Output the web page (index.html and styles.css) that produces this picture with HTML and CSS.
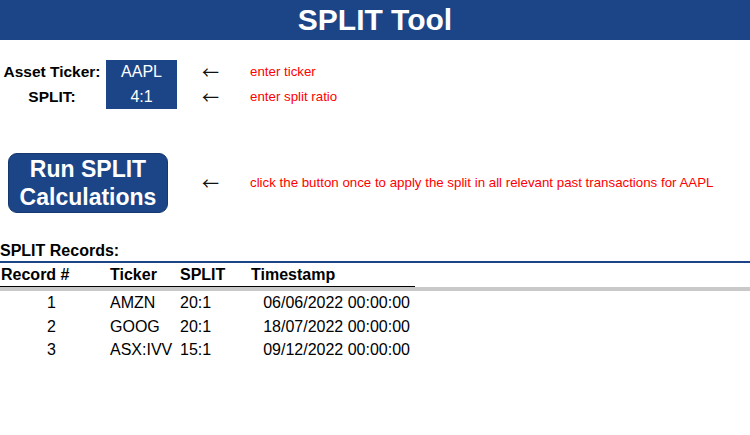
FILE: index.html
```html
<!DOCTYPE html>
<html lang="en">
<head>
<meta charset="utf-8">
<title>SPLIT Tool</title>
<link rel="stylesheet" href="styles.css">
</head>
<body>
<header class="banner"><h1 class="title">SPLIT Tool</h1></header>

<section class="inputs">
  <span class="label">Asset Ticker:</span>
  <span class="value">AAPL</span>
  <span class="arrow">←</span>
  <span class="hint">enter ticker</span>

  <span class="label">SPLIT:</span>
  <span class="value">4:1</span>
  <span class="arrow">←</span>
  <span class="hint">enter split ratio</span>
</section>

<section class="action">
  <button class="run" type="button">Run SPLIT<br>Calculations</button>
  <span class="arrow">←</span>
  <span class="hint">click the button once to apply the split in all relevant past transactions for AAPL</span>
</section>

<section class="records">
  <h2 class="records-title">SPLIT Records:</h2>
  <div class="grid head">
    <span class="c-rec">Record #</span>
    <span class="c-tick">Ticker</span>
    <span class="c-split">SPLIT</span>
    <span class="c-time">Timestamp</span>
  </div>
  <div class="body">
    <div class="grid row">
      <span class="c-rec">1</span>
      <span class="c-tick">AMZN</span>
      <span class="c-split">20:1</span>
      <span class="c-time">06/06/2022 00:00:00</span>
    </div>
    <div class="grid row">
      <span class="c-rec">2</span>
      <span class="c-tick">GOOG</span>
      <span class="c-split">20:1</span>
      <span class="c-time">18/07/2022 00:00:00</span>
    </div>
    <div class="grid row">
      <span class="c-rec">3</span>
      <span class="c-tick">ASX:IVV</span>
      <span class="c-split">15:1</span>
      <span class="c-time">09/12/2022 00:00:00</span>
    </div>
  </div>
</section>
</body>
</html>
```

FILE: styles.css
```css
* { box-sizing: border-box; }

html, body {
  margin: 0;
  padding: 0;
  background: #ffffff;
  font-family: "Liberation Sans", Arial, sans-serif;
  color: #000000;
}

.banner {
  height: 40px;
  background: #1c4587;
  display: flex;
  align-items: center;
  justify-content: center;
}

.title {
  margin: 0;
  color: #ffffff;
  font-size: 30px;
  font-weight: bold;
  line-height: 40px;
}

.inputs {
  margin-top: 20px;
  display: grid;
  grid-template-columns: 106px 71px 73px auto;
  grid-auto-rows: 24.5px;
  align-items: stretch;
}

.label {
  font-size: 15.5px;
  font-weight: bold;
  text-align: center;
  padding-right: 2px;
  line-height: 24.5px;
}

.value {
  background: #1c4587;
  color: #ffffff;
  font-size: 16px;
  text-align: center;
  line-height: 24.5px;
}

.arrow {
  font-family: "Noto Sans CJK JP", "DejaVu Sans", sans-serif;
  font-size: 17px;
  padding-left: 25px;
  line-height: 24.5px;
  color: #111111;
}

.hint {
  color: #ff0000;
  font-size: 13.3px;
  line-height: 24.5px;
}

.action {
  margin-top: 44px;
  display: grid;
  grid-template-columns: 177px 73px auto;
  align-items: center;
}

.run {
  margin-left: 8px;
  width: 160px;
  height: 60px;
  padding: 0;
  background: #1c4587;
  color: #ffffff;
  border: 1px solid #16386e;
  border-radius: 9px;
  font-family: "Liberation Sans", Arial, sans-serif;
  font-size: 23px;
  font-weight: bold;
  line-height: 28px;
  text-align: center;
}

.records {
  margin-top: 27px;
}

.records-title {
  margin: 0;
  font-size: 16px;
  font-weight: bold;
  line-height: 21px;
  border-bottom: 2px solid #1c4587;
}

.grid {
  width: 415px;
  display: grid;
  grid-template-columns: 107px 70px 71px 167px;
  font-size: 16px;
}

.head {
  font-weight: bold;
  line-height: 23px;
  border-bottom: 1px solid #000000;
}

.head .c-rec { padding-left: 1px; }

.body {
  border-top: 4px solid #c9c9c9;
}

.row {
  line-height: 23.5px;
}

.c-tick, .c-split { padding-left: 3px; }
.head .c-time { padding-left: 3px; }

.row .c-rec { text-align: center; padding-right: 4px; }
.row .c-time { text-align: right; padding-right: 5px; }
```
